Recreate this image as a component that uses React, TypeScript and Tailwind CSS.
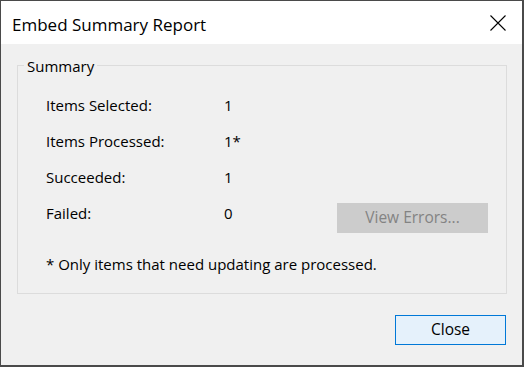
import React from 'react';

const rows = [
  { label: 'Items Selected:', value: '1' },
  { label: 'Items Processed:', value: '1*' },
  { label: 'Succeeded:', value: '1' },
];

export default function App() {
  return (
    <div
      className="w-[524px] h-[367px] flex flex-col border-l border-t border-r-2 border-b-2 border-[#4a4a4a] bg-[#f0f0f0] text-black text-[16px]"
      style={{ fontFamily: '"Segoe UI", "Open Sans", sans-serif' }}
    >
      {/* title bar */}
      <div className="h-[43px] bg-white flex items-center justify-between pl-[11px] pr-[16px]">
        <span className="text-[17px] leading-none pt-[3px]">Embed Summary Report</span>
        <svg width="16" height="16" viewBox="0 0 16 16" className="mt-[1px]">
          <path d="M0.5 0.5 L15.5 15.5 M15.5 0.5 L0.5 15.5" stroke="#000" strokeWidth="1.1" fill="none" />
        </svg>
      </div>

      <div className="flex-1 flex flex-col pl-[16px] pr-[15px] pt-[21px]">
        {/* group box */}
        <div className="relative border border-[#dcdcdc] pt-[21px] pb-[17px] pl-[28px] pr-[18px] text-[15px]">
          <span className="absolute left-[6px] top-[-10px] bg-[#f0f0f0] px-[3px] leading-[20px]">Summary</span>
          {rows.map((r) => (
            <div key={r.label} className="h-9 flex items-center">
              <span className="w-[178px]">{r.label}</span>
              <span>{r.value}</span>
            </div>
          ))}
          <div className="h-9 flex items-center">
            <span className="w-[178px]">Failed:</span>
            <span>0</span>
            <button
              disabled
              className="ml-auto self-start mt-[8px] w-[151px] h-[30px] bg-[#cccccc] text-[#838383] text-[15.5px]"
            >
              View Errors...
            </button>
          </div>
          <div className="mt-[21px] leading-[24px]">* Only items that need updating are processed.</div>
        </div>

        <div className="flex justify-end pt-[21px] pr-[1px]">
          <button className="w-[111px] h-[30px] bg-[#e5f1fb] border border-[#0078d7] text-[15.5px]">
            Close
          </button>
        </div>
      </div>
    </div>
  );
}
